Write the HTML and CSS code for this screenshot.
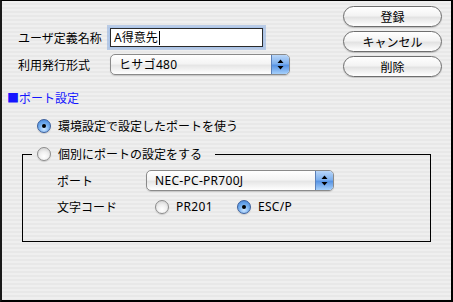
FILE: index.html
```html
<!DOCTYPE html>
<html lang="ja">
<head>
<meta charset="utf-8">
<title>ポート設定</title>
<link rel="stylesheet" href="styles.css">
</head>
<body>
<div class="window">
  <div class="top">
    <div class="form">
      <div class="row row-input">
        <span class="label">ユーザ定義名称</span>
        <div class="textfield"><span class="tf-text">A得意先</span><span class="caret"></span></div>
      </div>
      <div class="row row-popup">
        <span class="label">利用発行形式</span>
        <div class="popup popup-form">
          <span class="popup-text">ヒサゴ480</span>
          <span class="popup-arrows"><svg width="7" height="11" viewBox="0 0 7 11"><path d="M3.5 0.5 L6.5 4 L0.5 4 Z M0.5 7 L6.5 7 L3.5 10.5 Z" fill="#000"/></svg></span>
        </div>
      </div>
    </div>
    <div class="buttons">
      <div class="btn">登録</div>
      <div class="btn">キャンセル</div>
      <div class="btn">削除</div>
    </div>
  </div>

  <div class="heading">■ポート設定</div>

  <div class="radio-row first">
    <span class="radio on"><span class="dot"></span></span>
    <span class="rlabel">環境設定で設定したポートを使う</span>
  </div>

  <fieldset class="group">
    <legend class="legend">
      <span class="radio"></span>
      <span class="rlabel">個別にポートの設定をする</span>
    </legend>
    <div class="grow port-row">
      <span class="glabel">ポート</span>
      <div class="popup popup-port">
        <span class="popup-text latin">NEC-PC-PR700J</span>
        <span class="popup-arrows"><svg width="7" height="11" viewBox="0 0 7 11"><path d="M3.5 0.5 L6.5 4 L0.5 4 Z M0.5 7 L6.5 7 L3.5 10.5 Z" fill="#000"/></svg></span>
      </div>
    </div>
    <div class="grow code-row">
      <span class="glabel">文字コード</span>
      <div class="choice c1">
        <span class="radio"></span>
        <span class="rlabel latin">PR201</span>
      </div>
      <div class="choice c2">
        <span class="radio on"><span class="dot"></span></span>
        <span class="rlabel latin">ESC/P</span>
      </div>
    </div>
  </fieldset>
</div>
</body>
</html>
```

FILE: styles.css
```css
* { box-sizing: border-box; }
html, body { margin: 0; padding: 0; }
body {
  width: 453px;
  height: 302px;
  overflow: hidden;
  font-family: "Noto Sans", "Noto Sans CJK JP", sans-serif;
  font-size: 12px;
  color: #000;
}
.window {
  width: 453px;
  height: 302px;
  border-top: 1px solid #000;
  border-left: 2px solid #1a1a1a;
  border-right: 2px solid #000;
  border-bottom: 2px solid #000;
  background: repeating-linear-gradient(to bottom, #efefef 0 2px, #e8e8e8 2px 4px);
  padding: 4px 9px 0 0;
}
.top {
  display: flex;
  justify-content: space-between;
  height: 72px;
}
.form {
  margin-left: 16px;
  padding-top: 23px;
  display: flex;
  flex-direction: column;
  gap: 7px;
}
.row {
  display: flex;
  align-items: center;
}
.row-input { height: 19px; }
.row-popup { height: 21px; }
.label {
  width: 92px;
  font-family: "Noto Sans CJK JP", sans-serif;
  line-height: 16px;
}
.textfield {
  width: 153px;
  height: 19px;
  background: #fff;
  border: 1px solid #2b2b2b;
  box-shadow: 0 0 0 1px #a9c4ea, 0 0 0 3px rgba(120,160,220,0.45);
  display: flex;
  align-items: center;
  padding-left: 3px;
}
.tf-text {
  font-family: "Noto Sans", "Noto Sans CJK JP", sans-serif;
  line-height: 16px;
}
.caret {
  width: 1px;
  height: 14px;
  background: #000;
  margin-left: 1px;
}
.popup {
  height: 21px;
  border: 1px solid #8a8a8a;
  border-radius: 5px;
  background: linear-gradient(to bottom, #ffffff 0%, #f4f4f4 45%, #e6e6e6 55%, #ffffff 100%);
  display: flex;
  align-items: stretch;
  overflow: hidden;
  box-shadow: 0 1px 1px rgba(0,0,0,0.15);
}
.popup-form { width: 180px; }
.popup-port { width: 188px; }
.popup-text {
  flex: 1;
  padding-left: 8px;
  line-height: 19px;
  letter-spacing: 0.3px;
}
.popup-arrows {
  width: 18px;
  border-left: 1px solid #5a7fb8;
  background: linear-gradient(to bottom, #b9d6f8 0%, #7fb1ee 45%, #5894e4 55%, #a6d0fb 100%);
  display: flex;
  align-items: center;
  justify-content: center;
}
.buttons {
  display: flex;
  flex-direction: column;
  gap: 4px;
  padding-top: 1px;
}
.btn {
  width: 99px;
  height: 21px;
  border: 1px solid #6e6e6e;
  border-radius: 11px;
  background: linear-gradient(to bottom, #ffffff 0%, #f3f3f3 45%, #e3e3e3 55%, #f6f6f6 85%, #ffffff 100%);
  box-shadow: 0 1px 1px rgba(0,0,0,0.18);
  text-align: center;
  line-height: 19px;
  font-family: "Noto Sans CJK JP", sans-serif;
  font-size: 12px;
}
.heading {
  margin-top: 13px;
  margin-left: 5px;
  color: #1515ff;
  font-family: "Noto Sans CJK JP", sans-serif;
  line-height: 16px;
}
.radio-row {
  display: flex;
  align-items: center;
  height: 16px;
}
.radio-row.first {
  margin-top: 12px;
  margin-left: 35px;
}
.radio {
  width: 14px;
  height: 14px;
  border-radius: 50%;
  border: 1px solid #8c8c8c;
  background: radial-gradient(circle at 50% 70%, #ffffff 0%, #f0f0f0 45%, #c9c9c9 100%);
  display: inline-flex;
  align-items: center;
  justify-content: center;
  flex: none;
  box-shadow: 0 1px 1px rgba(0,0,0,0.15);
}
.radio.on {
  border-color: #3b5f9c;
  background: radial-gradient(circle at 50% 75%, #cfe6ff 0%, #79b2f0 45%, #3f7fd6 100%);
}
.dot {
  width: 4px;
  height: 4px;
  border-radius: 50%;
  background: #000;
}
.rlabel {
  margin-left: 7px;
  font-family: "Noto Sans CJK JP", sans-serif;
  line-height: 16px;
}
.latin {
  font-family: "Noto Sans", sans-serif;
  letter-spacing: 0.3px;
}
.group {
  margin: 12px 0 0 20px;
  width: 409px;
  height: 96px;
  border: 1px solid #000;
  padding: 0 0 0 34px;
}
.legend {
  display: flex;
  align-items: center;
  height: 16px;
  padding: 0 13px 0 5px;
  margin-left: -25px;
}
.grow {
  display: flex;
  align-items: center;
}
.port-row {
  height: 21px;
  margin-top: 8px;
}
.code-row {
  height: 18px;
  margin-top: 7px;
}
.glabel {
  width: 89px;
  font-family: "Noto Sans CJK JP", sans-serif;
  line-height: 16px;
}
.choice {
  display: flex;
  align-items: center;
}
.c1 { margin-left: 9px; width: 82px; }
```
